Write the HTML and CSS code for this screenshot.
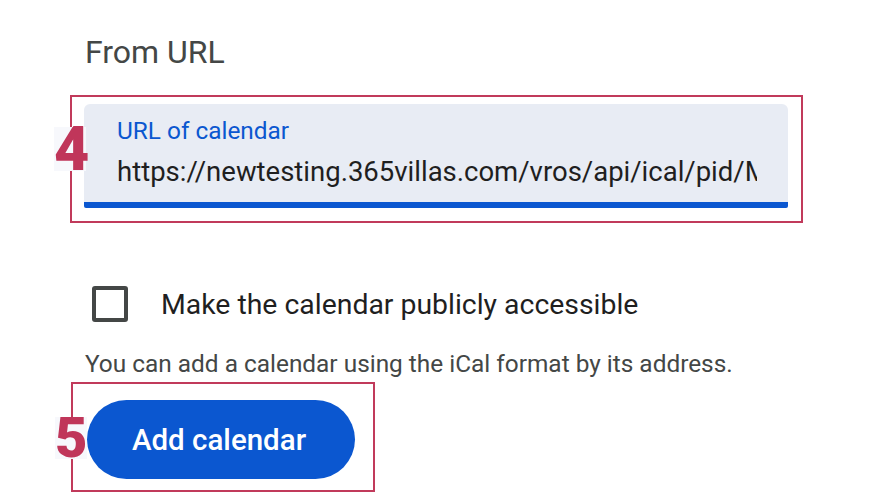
FILE: index.html
```html
<!DOCTYPE html>
<html lang="en">
<head>
<meta charset="utf-8">
<title>From URL</title>
<link rel="stylesheet" href="styles.css">
</head>
<body>
<main class="page">
  <h2 class="title">From URL</h2>

  <div class="mark mark-field">
    <span class="step step-4">4</span>
    <div class="field">
      <label class="field-label" for="url">URL of calendar</label>
      <div class="field-value" id="url">https://newtesting.365villas.com/vros/api/ical/pid/M</div>
    </div>
  </div>

  <div class="check-row">
    <span class="checkbox"></span>
    <span class="check-label">Make the calendar publicly accessible</span>
  </div>

  <p class="helper">You can add a calendar using the iCal format by its address.</p>

  <div class="mark mark-btn">
    <span class="step step-5">5</span>
    <button class="btn" type="button">Add calendar</button>
  </div>
</main>
</body>
</html>
```

FILE: styles.css
```css
* { box-sizing: border-box; }
html, body { margin: 0; padding: 0; background: #ffffff; }
body { font-family: Roboto, "Noto Sans", Arial, sans-serif; }

.page {
  padding: 34px 0 0 85px;
  width: 874px;
  height: 504px;
  overflow: hidden;
}

.title {
  margin: 0;
  font-size: 32px;
  line-height: 36px;
  font-weight: 400;
  color: #444746;
}

.mark {
  position: relative;
  border: 2px solid #c13a5b;
}

.mark-field {
  margin: 25px 0 0 -15px;
  width: 733px;
  height: 128px;
  padding: 7px 13px 0 12px;
}

.step {
  position: absolute;
  display: block;
  background: #f7f8fc;
  color: #c0365a;
  font-family: Roboto, "Noto Sans", sans-serif;
  font-weight: 900;
  text-align: center;
}
.step-4 {
  left: -18px;
  top: 30px;
  width: 32px;
  height: 44px;
  font-size: 61px;
  line-height: 44px;
}
.step-5 {
  left: -18px;
  top: 33px;
  width: 32px;
  height: 42px;
  font-size: 56px;
  line-height: 42px;
}

.field {
  height: 104px;
  background: #e8ecf4;
  border-radius: 6px 6px 2px 2px;
  border-bottom: 6px solid #0b57d0;
  padding: 13px 31px 0 33px;
  overflow: hidden;
}
.field-label {
  display: block;
  font-size: 24.4px;
  line-height: 28px;
  color: #0b57d0;
}
.field-value {
  margin-top: 11px;
  font-size: 27.5px;
  line-height: 32px;
  color: #1f1f1f;
  white-space: nowrap;
  overflow: hidden;
}

.check-row {
  display: flex;
  align-items: center;
  margin: 63px 0 0 7px;
  height: 36px;
}
.checkbox {
  width: 36px;
  height: 36px;
  border: 4px solid #444746;
  border-radius: 3px;
  flex: none;
}
.check-label {
  margin-left: 33px;
  font-size: 28.4px;
  line-height: 33px;
  color: #1f1f1f;
}

.helper {
  margin: 28px 0 0 0;
  font-size: 24.4px;
  line-height: 28px;
  color: #444746;
}

.mark-btn {
  margin: 4px 0 0 -14px;
  width: 304px;
  height: 110px;
  padding: 16px 0 0 14px;
}

.btn {
  display: block;
  width: 268px;
  height: 79px;
  border: 0;
  border-radius: 40px;
  background: #0b57d0;
  color: #ffffff;
  font-family: Roboto, "Noto Sans", sans-serif;
  font-size: 29.5px;
  font-weight: 500;
  padding: 0 4px 0 0;
  text-align: center;
}
```
